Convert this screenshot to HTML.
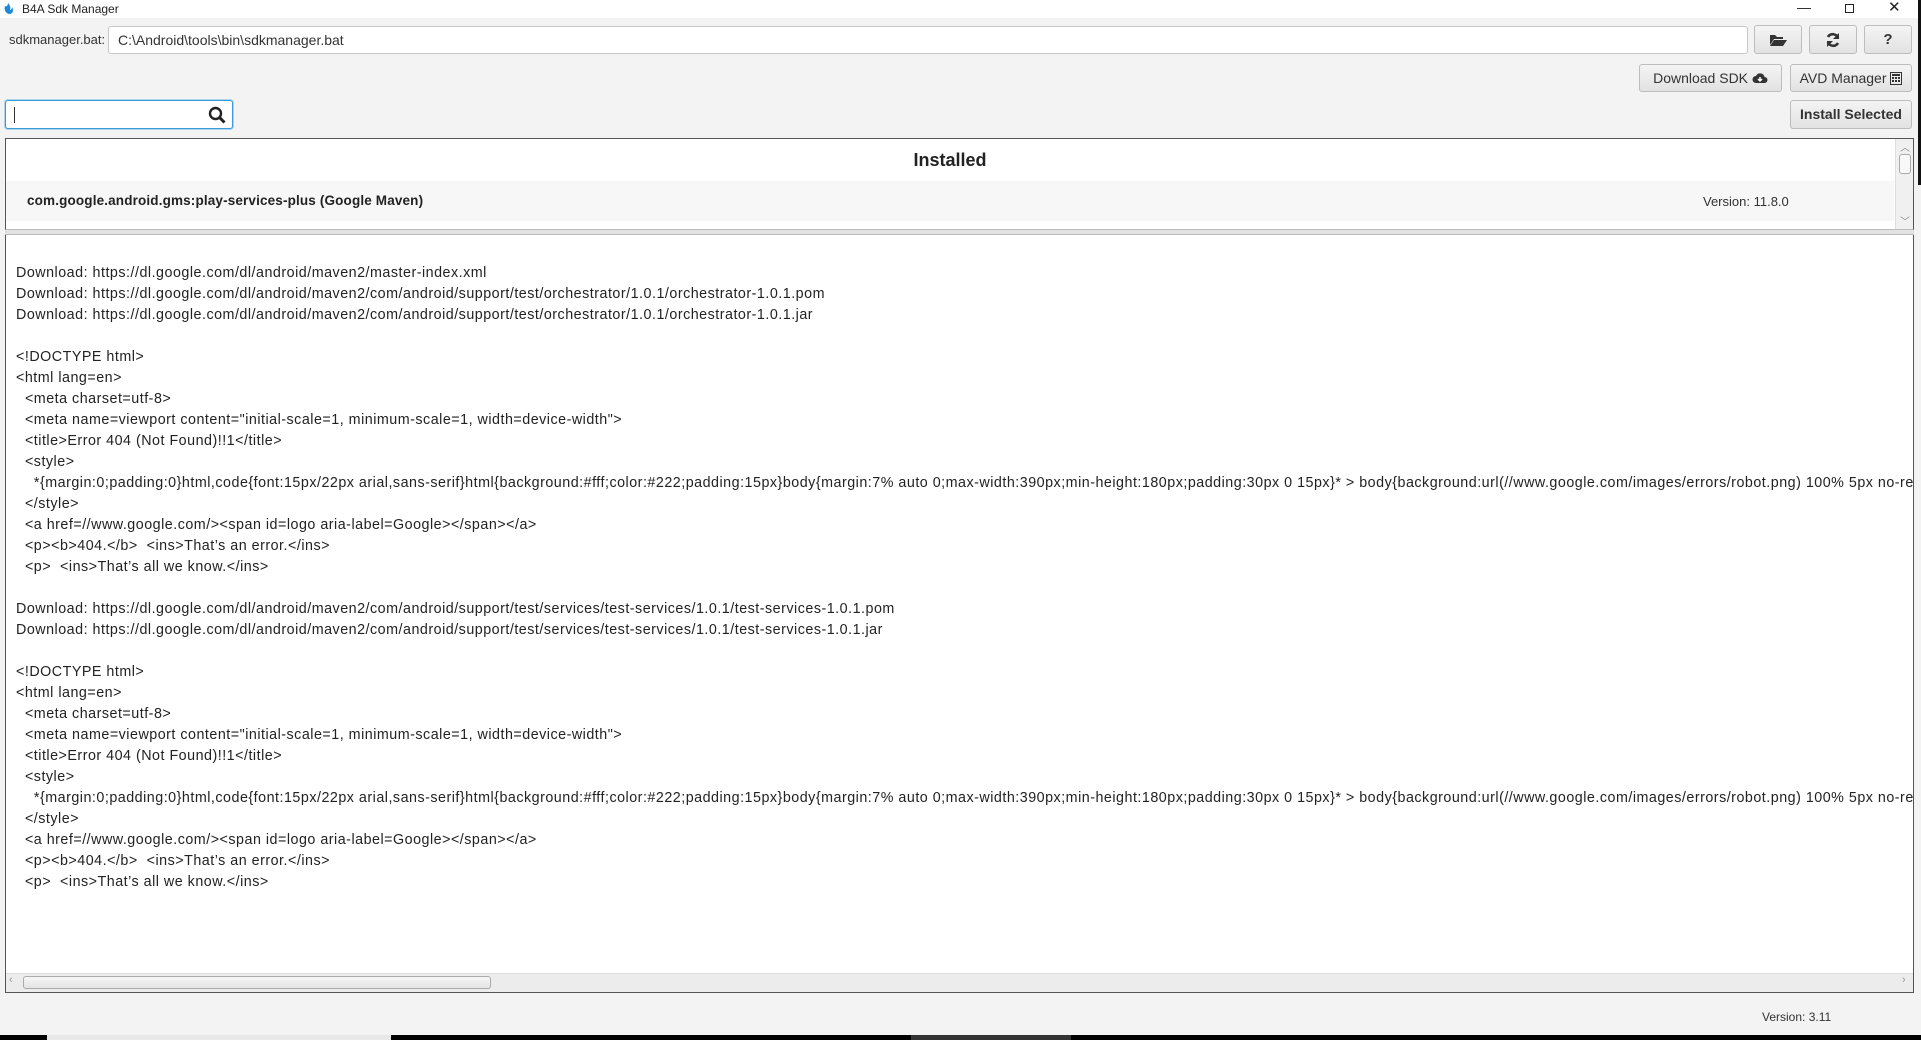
<!DOCTYPE html>
<html><head><meta charset="utf-8">
<style>
*{box-sizing:border-box;margin:0;padding:0}
body{width:1921px;height:1040px;background:#f3f3f3;font-family:"Liberation Sans",sans-serif;position:relative;overflow:hidden;color:#222}
.a{position:absolute}
.title{left:0;top:0;width:1921px;height:18px;background:#fff;font-size:12px;line-height:18px}
.btn{position:absolute;background:linear-gradient(#f4f4f4,#e2e2e2);border:1px solid #bdbdbd;border-radius:3px;font-size:14px;color:#333;text-align:center}
.field{position:absolute;background:#fff;border:1px solid #c8c8c8;border-radius:3px}
pre{font-family:"Liberation Sans",sans-serif;font-size:14.3px;line-height:21px;color:#222;white-space:pre;letter-spacing:0.5px}
</style></head><body>
<div class="a title">
  <svg class="a" style="left:3px;top:3px" width="12" height="12" viewBox="0 0 12 12"><path d="M2 3C1 6 2 10 6 11 10 11 11 7 9 4 9 6 8 7 7 7 8 5 7 2 5 0 5 3 3 4 2 3Z" fill="#1e88d8"/></svg>
  <span class="a" style="left:22px;top:0">B4A Sdk Manager</span>
  <span class="a" style="left:1797px;top:-2px;font-size:14px">—</span>
  <div class="a" style="left:1845px;top:4px;width:9px;height:9px;border:1px solid #222"></div>
  <span class="a" style="left:1888px;top:-1px;font-size:15px">✕</span>
</div>
<div class="a" style="left:1918px;top:0;width:3px;height:185px;background:#111"></div>
<span class="a" style="left:9px;top:32px;font-size:13px;color:#333">sdkmanager.bat:</span>
<div class="field" style="left:108px;top:26px;width:1640px;height:28px;font-size:14px;line-height:26px;padding-left:9px;color:#333">C:\Android\tools\bin\sdkmanager.bat</div>
<div class="btn" style="left:1754px;top:25px;width:48px;height:29px">
  <svg style="margin-top:7px" width="18" height="14" viewBox="0 0 18 14"><path d="M1 2h5l2 2h6v2H5L1 12Z" fill="#333"/><path d="M5 7h13l-4 6H1Z" fill="#333"/></svg></div>
<div class="btn" style="left:1809px;top:25px;width:48px;height:29px">
  <svg style="margin-top:6px" width="16" height="16" viewBox="0 0 16 16"><path d="M13 6A5.5 5.5 0 0 0 3 5" stroke="#333" stroke-width="2.6" fill="none"/><path d="M14 1v6H8Z" fill="#333"/><path d="M3 10A5.5 5.5 0 0 0 13 11" stroke="#333" stroke-width="2.6" fill="none"/><path d="M2 15V9h6Z" fill="#333"/></svg></div>
<div class="btn" style="left:1864px;top:25px;width:48px;height:29px;font-weight:bold;font-size:15px;line-height:27px">?</div>
<div class="btn" style="left:1639px;top:64px;width:143px;height:28px;line-height:26px">Download SDK <svg width="16" height="12" viewBox="0 0 16 12" style="vertical-align:-1px"><path d="M4 11a3.5 3.5 0 0 1 0-7 4.5 4.5 0 0 1 8.5 1A3 3 0 0 1 12.5 11Z" fill="#333"/><path d="M8 5v4M6 7l2 2 2-2" stroke="#fff" stroke-width="1.5" fill="none"/></svg></div>
<div class="btn" style="left:1790px;top:64px;width:122px;height:28px;line-height:26px">AVD Manager <svg width="12" height="13" viewBox="0 0 12 13" style="vertical-align:-2px"><rect x="0.5" y="0.5" width="11" height="12" fill="none" stroke="#333"/><path d="M2 2h8v2H2ZM2 5h2v2H2Zm3 0h2v2H5Zm3 0h2v2H8ZM2 8h2v2H2Zm3 0h2v2H5Zm3 0h2v2H8Z" fill="#333"/></svg></div>
<div class="btn" style="left:1790px;top:100px;width:122px;height:29px;line-height:27px;font-weight:bold;color:#333">Install Selected</div>
<div class="field" style="left:5px;top:100px;width:228px;height:29px;border:1px solid #3c9ad6;box-shadow:0 0 0 1px #a9d3ef">
  <div class="a" style="left:8px;top:6px;width:1px;height:16px;background:#333"></div>
  <svg class="a" style="left:202px;top:5px" width="18" height="18" viewBox="0 0 18 18"><circle cx="7.5" cy="7.5" r="5.5" stroke="#222" stroke-width="2.4" fill="none"/><path d="M11.5 11.5 16.5 16.5" stroke="#222" stroke-width="3"/></svg>
</div>
<div class="a" style="left:5px;top:138px;width:1909px;height:92px;background:#fff;border:1px solid #555;border-bottom:1px solid #bbb">
  <div class="a" style="left:0;top:11px;width:1888px;text-align:center;font-weight:bold;font-size:18px">Installed</div>
  <div class="a" style="left:0;top:42px;width:1888px;height:40px;background:#f7f7f7"></div>
  <div class="a" style="left:21px;top:54px;font-weight:bold;font-size:13.5px;letter-spacing:0.15px">com.google.android.gms:play-services-plus (Google Maven)</div>
  <div class="a" style="left:1697px;top:55px;font-size:13px;color:#333">Version: 11.8.0</div>
  <div class="a" style="left:1889px;top:0;width:18px;height:90px;background:#f0f0f0;border-left:1px solid #ddd">
    <div class="a" style="left:3px;top:15px;width:12px;height:20px;border:1px solid #aaa;border-radius:3px;background:#f8f8f8"></div>
    <span class="a" style="left:4px;top:0;font-size:10px;color:#888">︿</span>
    <span class="a" style="left:4px;top:74px;font-size:10px;color:#888">﹀</span>
  </div>
</div>
<div class="a" style="left:5px;top:230px;width:1909px;height:5px;background:#e2e2e2;border-bottom:1px solid #bbb"></div>
<div class="a" style="left:5px;top:235px;width:1909px;height:758px;background:#fff;border:1px solid #555;border-top:none;overflow:hidden">
<pre class="a" style="left:10px;top:28px">Download: https://dl.google.com/dl/android/maven2/master-index.xml
Download: https://dl.google.com/dl/android/maven2/com/android/support/test/orchestrator/1.0.1/orchestrator-1.0.1.pom
Download: https://dl.google.com/dl/android/maven2/com/android/support/test/orchestrator/1.0.1/orchestrator-1.0.1.jar

&lt;!DOCTYPE html&gt;
&lt;html lang=en&gt;
  &lt;meta charset=utf-8&gt;
  &lt;meta name=viewport content="initial-scale=1, minimum-scale=1, width=device-width"&gt;
  &lt;title&gt;Error 404 (Not Found)!!1&lt;/title&gt;
  &lt;style&gt;
    *{margin:0;padding:0}html,code{font:15px/22px arial,sans-serif}html{background:#fff;color:#222;padding:15px}body{margin:7% auto 0;max-width:390px;min-height:180px;padding:30px 0 15px}* &gt; body{background:url(//www.google.com/images/errors/robot.png) 100% 5px no-repeat;padding-right:205px}
  &lt;/style&gt;
  &lt;a href=//www.google.com/&gt;&lt;span id=logo aria-label=Google&gt;&lt;/span&gt;&lt;/a&gt;
  &lt;p&gt;&lt;b&gt;404.&lt;/b&gt;  &lt;ins&gt;That’s an error.&lt;/ins&gt;
  &lt;p&gt;  &lt;ins&gt;That’s all we know.&lt;/ins&gt;

Download: https://dl.google.com/dl/android/maven2/com/android/support/test/services/test-services/1.0.1/test-services-1.0.1.pom
Download: https://dl.google.com/dl/android/maven2/com/android/support/test/services/test-services/1.0.1/test-services-1.0.1.jar

&lt;!DOCTYPE html&gt;
&lt;html lang=en&gt;
  &lt;meta charset=utf-8&gt;
  &lt;meta name=viewport content="initial-scale=1, minimum-scale=1, width=device-width"&gt;
  &lt;title&gt;Error 404 (Not Found)!!1&lt;/title&gt;
  &lt;style&gt;
    *{margin:0;padding:0}html,code{font:15px/22px arial,sans-serif}html{background:#fff;color:#222;padding:15px}body{margin:7% auto 0;max-width:390px;min-height:180px;padding:30px 0 15px}* &gt; body{background:url(//www.google.com/images/errors/robot.png) 100% 5px no-repeat;padding-right:205px}
  &lt;/style&gt;
  &lt;a href=//www.google.com/&gt;&lt;span id=logo aria-label=Google&gt;&lt;/span&gt;&lt;/a&gt;
  &lt;p&gt;&lt;b&gt;404.&lt;/b&gt;  &lt;ins&gt;That’s an error.&lt;/ins&gt;
  &lt;p&gt;  &lt;ins&gt;That’s all we know.&lt;/ins&gt;</pre>
  <div class="a" style="left:0;top:738px;width:1907px;height:19px;background:#ececec;border-top:1px solid #ddd">
    <div class="a" style="left:17px;top:2px;width:468px;height:13px;border:1px solid #aaa;border-radius:3px;background:linear-gradient(#f6f6f6,#e4e4e4)"></div>
    <span class="a" style="left:3px;top:0;font-size:11px;color:#999">‹</span>
    <span class="a" style="left:1896px;top:0;font-size:11px;color:#999">›</span>
  </div>
</div>
<div class="a" style="left:1762px;top:1010px;font-size:12px;color:#333">Version: 3.11</div>
<div class="a" style="left:0;top:1035px;width:1921px;height:5px;background:#000"></div>
<div class="a" style="left:47px;top:1035px;width:344px;height:5px;background:#e8e8e8"></div>
<div class="a" style="left:911px;top:1035px;width:160px;height:5px;background:#333"></div>
</body></html>
